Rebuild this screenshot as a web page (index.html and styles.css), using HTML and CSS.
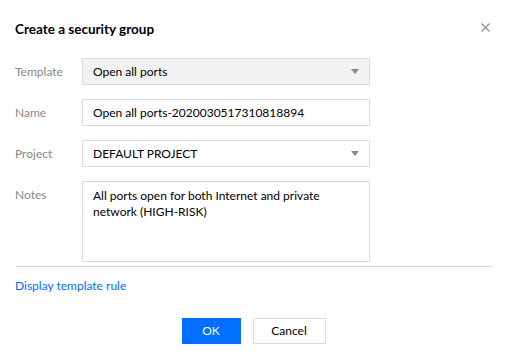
FILE: index.html
```html
<!DOCTYPE html>
<html>

<head>
    <title>Create a security group</title>
    <link rel="stylesheet" href="styles.css">
</head>

<body>
    <div class="dialog">
        <div class="dialog-header">
            <h3 class="dialog-title">Create a security group</h3>
            <a class="dialog-close">
                <svg width="9" height="9" viewBox="0 0 9 9">
                    <path d="M0.5 0.5 L8.5 8.5 M8.5 0.5 L0.5 8.5" stroke="#888" stroke-width="1.1" fill="none" />
                </svg>
            </a>
        </div>

        <div class="form">
            <div class="form-row">
                <label class="form-label">Template</label>
                <div class="field select disabled">
                    <span>Open all ports</span>
                    <i class="caret"></i>
                </div>
            </div>
            <div class="form-row">
                <label class="form-label">Name</label>
                <div class="field input">Open all ports-2020030517310818894</div>
            </div>
            <div class="form-row">
                <label class="form-label">Project</label>
                <div class="field select">
                    <span>DEFAULT PROJECT</span>
                    <i class="caret"></i>
                </div>
            </div>
            <div class="form-row form-row-top">
                <label class="form-label">Notes</label>
                <div class="field textarea">All ports open for both Internet and private network (HIGH-RISK)</div>
            </div>
        </div>

        <div class="divider"></div>

        <a class="link">Display template rule</a>

        <div class="dialog-footer">
            <a class="btn btn-primary">OK</a>
            <a class="btn">Cancel</a>
        </div>
    </div>
</body>

</html>
```

FILE: styles.css
```css
:root {
    --primary-color: #006eff;
    --border-color: #dddddd;
    --label-color: #888888;
    --text-color: #000000;
}

body {
    margin: 0;
    background: #ffffff;
    font-family: Lato, "Noto Sans", sans-serif;
    font-size: 12px;
    color: var(--text-color);
}

.dialog {
    padding: 0 17px 0 15px;
}

.dialog-header {
    display: flex;
    align-items: center;
    justify-content: space-between;
    padding-top: 20px;
    height: 18px;
}

.dialog-title {
    margin: 0;
    font-size: 13.5px;
    font-weight: bold;
    line-height: 18px;
}

.dialog-close {
    display: flex;
    margin-right: 2px;
    margin-top: -3px;
}

.form {
    display: flex;
    flex-direction: column;
    gap: 14px;
    margin-top: 20px;
}

.form-row {
    display: flex;
    align-items: center;
}

.form-row-top {
    align-items: flex-start;
}

.form-label {
    width: 67px;
    color: var(--label-color);
    line-height: 16px;
}

.form-row-top .form-label {
    padding-top: 6px;
}

.field {
    box-sizing: border-box;
    width: 288px;
    height: 27px;
    border: 1px solid var(--border-color);
    padding: 0 10px;
    line-height: 25px;
    background: #fff;
}

.select {
    display: flex;
    align-items: center;
    justify-content: space-between;
}

.disabled {
    background: #f2f2f2;
}

.caret {
    width: 0;
    height: 0;
    border-left: 4px solid transparent;
    border-right: 4px solid transparent;
    border-top: 5px solid var(--label-color);
}

.textarea {
    height: 81px;
    padding-top: 6px;
    line-height: 16px;
}

.divider {
    height: 1px;
    background: var(--border-color);
    margin-top: 4px;
}

.link {
    display: block;
    margin-top: 11px;
    color: var(--primary-color);
    line-height: 16px;
}

.dialog-footer {
    display: flex;
    justify-content: center;
    gap: 12px;
    margin-top: 24px;
}

.btn {
    box-sizing: border-box;
    width: 73px;
    height: 26px;
    border: 1px solid var(--border-color);
    line-height: 24px;
    text-align: center;
    color: var(--text-color);
    background: #fff;
}

.btn-primary {
    width: 59px;
    background: var(--primary-color);
    border-color: var(--primary-color);
    color: #fff;
}
```
